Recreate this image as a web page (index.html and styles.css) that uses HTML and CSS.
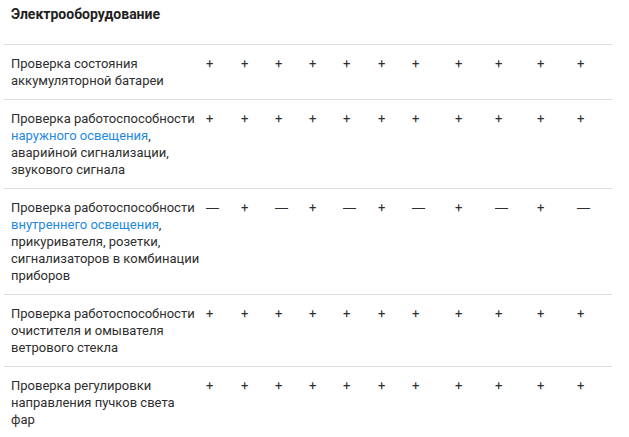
FILE: index.html
```html
<!DOCTYPE html>
<html lang="ru">
<head>
<meta charset="utf-8">
<link rel="stylesheet" href="styles.css">
</head>
<body>
<div class="section">
  <h3 class="title">Электрооборудование</h3>
  <table class="grid">
    <colgroup>
      <col class="c-name">
      <col class="c35"><col class="c34"><col class="c34"><col class="c34"><col class="c35"><col class="c34">
      <col class="c43"><col class="c40"><col class="c42"><col class="c40"><col class="c35">
    </colgroup>
    <tbody>
      <tr>
        <td class="name">Проверка состояния аккумуляторной батареи</td>
        <td>+</td><td>+</td><td>+</td><td>+</td><td>+</td><td>+</td><td>+</td><td>+</td><td>+</td><td>+</td><td>+</td>
      </tr>
      <tr>
        <td class="name">Проверка работоспособности <a class="link" href="#">наружного освещения</a>, аварийной сигнализации, звукового сигнала</td>
        <td>+</td><td>+</td><td>+</td><td>+</td><td>+</td><td>+</td><td>+</td><td>+</td><td>+</td><td>+</td><td>+</td>
      </tr>
      <tr>
        <td class="name">Проверка работоспособности <a class="link" href="#">внутреннего освещения</a>, прикуривателя, розетки, сигнализаторов в комбинации приборов</td>
        <td class="dash">—</td><td>+</td><td class="dash">—</td><td>+</td><td class="dash">—</td><td>+</td><td class="dash">—</td><td>+</td><td class="dash">—</td><td>+</td><td class="dash">—</td>
      </tr>
      <tr>
        <td class="name">Проверка работоспособности очистителя и омывателя ветрового стекла</td>
        <td>+</td><td>+</td><td>+</td><td>+</td><td>+</td><td>+</td><td>+</td><td>+</td><td>+</td><td>+</td><td>+</td>
      </tr>
      <tr>
        <td class="name">Проверка регулировки направления пучков света фар</td>
        <td>+</td><td>+</td><td>+</td><td>+</td><td>+</td><td>+</td><td>+</td><td>+</td><td>+</td><td>+</td><td>+</td>
      </tr>
    </tbody>
  </table>
</div>
</body>
</html>
```

FILE: styles.css
```css
html, body {
  margin: 0;
  padding: 0;
  background: #ffffff;
}
body {
  font-family: Roboto, "Liberation Sans", Arial, sans-serif;
  font-size: 13px;
  line-height: 17px;
  color: #2e2e2e;
}
.section {
  padding-left: 4px;
}
.title {
  margin: 6px 0 21px 0;
  padding-left: 7px;
  font-size: 14px;
  line-height: 17px;
  font-weight: 700;
  color: #222222;
}
.grid {
  width: 608px;
  table-layout: fixed;
  border-collapse: collapse;
}
.c-name { width: 202px; }
.c34 { width: 34px; }
.c35 { width: 35px; }
.c40 { width: 40px; }
.c42 { width: 42px; }
.c43 { width: 43px; }
.grid td {
  vertical-align: top;
  padding: 10px 0 10px 0;
  border-top: 1px solid #dedede;
  text-align: left;
}
.grid td.name {
  padding-left: 7px;
  padding-right: 6px;
}
.grid td.dash {
  font-family: "Liberation Sans", Arial, sans-serif;
}
.link {
  color: #1e88e5;
  text-decoration: none;
}
```
